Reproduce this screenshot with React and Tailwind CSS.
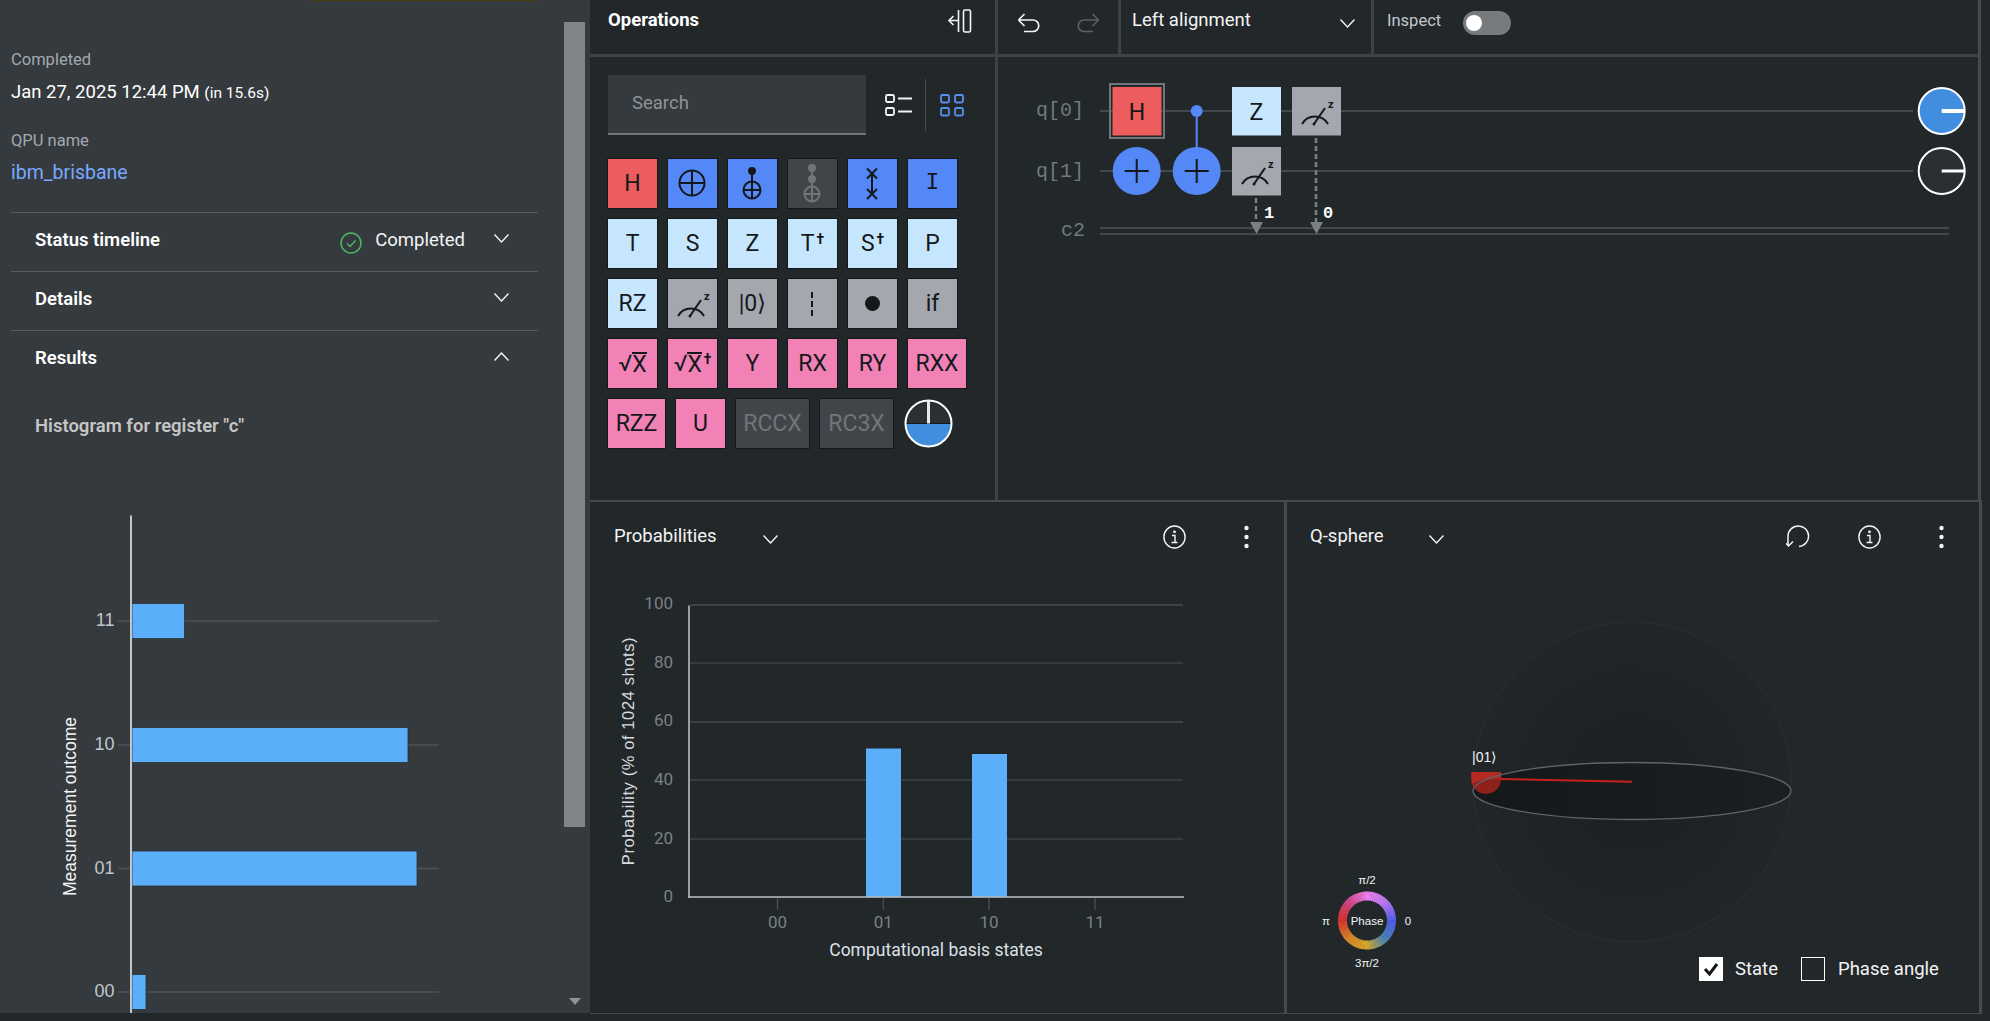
import React from "react";

const sans = "[font-family:Roboto,sans-serif]";
const ink = "#14181b";

function Chevron({ up = false, className = "" }) {
  return (
    <svg width="15" height="9" viewBox="0 0 15 9" fill="none" stroke="#f4f4f4" strokeWidth="1.4" className={className}>
      <polyline points={up ? "0.5,8.5 7.5,1 14.5,8.5" : "0.5,0.5 7.5,8 14.5,0.5"} />
    </svg>
  );
}

function Info() {
  return (
    <svg width="23" height="24" viewBox="0 0 23 24" fill="none" stroke="#f4f4f4" strokeWidth="1.4">
      <ellipse cx="11.5" cy="12" rx="10.6" ry="11" />
      <circle cx="11.5" cy="6.8" r="1.4" fill="#f4f4f4" stroke="none" />
      <path d="M9 10.5h3v7M8.5 17.5h6" />
    </svg>
  );
}

function Kebab() {
  return (
    <svg width="5" height="24" viewBox="0 0 5 24" fill="#f4f4f4">
      <circle cx="2.5" cy="3" r="2.2" />
      <circle cx="2.5" cy="12" r="2.2" />
      <circle cx="2.5" cy="21" r="2.2" />
    </svg>
  );
}

function Meter({ color = ink }) {
  return (
    <svg width="49" height="49" viewBox="0 0 49 49" fill="none" stroke={color} strokeWidth="2">
      <path d="M10 37a15 15 0 0 1 26 0" />
      <path d="M22 37L33 21" />
      <circle cx="22" cy="37" r="1.5" fill={color} stroke="none" />
      <text x="36" y="21" fontSize="11" fontWeight="700" fill={color} stroke="none" fontFamily="Roboto, sans-serif">z</text>
    </svg>
  );
}

function Glyph({ kind }) {
  if (kind === "cx")
    return (
      <svg width="49" height="49" fill="none" stroke={ink} strokeWidth="2">
        <circle cx="24" cy="24" r="12.5" />
        <path d="M24 11.5v25M11.5 24h25" />
      </svg>
    );
  if (kind === "ccx")
    return (
      <svg width="49" height="49" fill="none" stroke={ink} strokeWidth="2">
        <circle cx="24" cy="12" r="3" fill={ink} />
        <circle cx="24" cy="31" r="8.5" />
        <path d="M24 12v27.5M15.5 31h17" />
      </svg>
    );
  if (kind === "tof")
    return (
      <svg width="49" height="49" fill="none" stroke="#70757a" strokeWidth="2">
        <circle cx="24" cy="9" r="3" fill="#70757a" />
        <circle cx="24" cy="20" r="3" fill="#70757a" />
        <circle cx="24" cy="35" r="7.5" />
        <path d="M24 9v33.5M16.5 35h15" />
      </svg>
    );
  if (kind === "swap")
    return (
      <svg width="49" height="49" fill="none" stroke={ink} strokeWidth="2">
        <path d="M24 14v21M19 9.5l10 10M29 9.5l-10 10M19 30l10 10M29 30l-10 10" />
      </svg>
    );
  if (kind === "barrier")
    return (
      <svg width="49" height="49" fill="none" stroke={ink} strokeWidth="2">
        <path d="M24 13v6M24 22v6M24 31v6" />
      </svg>
    );
  if (kind === "dot")
    return (
      <svg width="49" height="49">
        <circle cx="24.5" cy="24.5" r="7.5" fill={ink} />
      </svg>
    );
  return <Meter />;
}

function Gate({ bg, label, sup, kind, root, w = "w-[49px]", text = "text-[#14181b]", mono }) {
  return (
    <div className={`${w} h-[49px] ${bg} ${text} flex items-center justify-center text-[23px] leading-none shadow-[0_0_0_1px_#14181b] ${mono ? "[font-family:'Liberation_Mono',monospace]" : ""}`}>
      {kind ? (
        <Glyph kind={kind} />
      ) : (
        <span className="flex items-start">
          {root && <span className="text-[23px] leading-none">√</span>}
          <span className={root ? "border-t-2 border-[#14181b] leading-[21px]" : ""}>{label}</span>
          {sup && <span className="text-[14px] leading-none font-bold ml-[2px]">†</span>}
        </span>
      )}
    </div>
  );
}

const red = "bg-[#ee5d5d]";
const blue = "bg-[#5588f7]";
const light = "bg-[#c5e6fc]";
const gray = "bg-[#a4a8ae]";
const pink = "bg-[#f282b5]";
const off = "bg-[#414549]";

function Operations() {
  return (
    <section className="w-[405px] flex flex-col">
      <div className="h-[54px] flex items-center justify-between pl-[18px] pr-[23px] pb-3">
        <h2 className="text-[18.5px] font-bold text-white">Operations</h2>
        <svg width="24" height="24" viewBox="0 0 24 24" fill="none" stroke="#f4f4f4" strokeWidth="1.6">
          <path d="M1 11.5h9M5.5 7l-4.5 4.5 4.5 4.5M10.5 1v22" />
          <rect x="15.5" y="1" width="7" height="22" rx="1.5" />
        </svg>
      </div>
      <div className="h-[3px] bg-[#3d4246]" />
      <div className="px-[18px] pt-[18px]">
        <div className="flex items-center">
          <div className="w-[258px] h-[60px] bg-[#353a3e] border-b-2 border-[#6f7579] flex items-center pl-6 text-[18.5px] text-[#8d9397]">
            Search
          </div>
          <svg width="28" height="24" viewBox="0 0 28 24" fill="none" stroke="#f4f4f4" strokeWidth="1.8" className="ml-[19px]">
            <rect x="1" y="2" width="8" height="7" rx="1.5" />
            <rect x="1" y="15" width="8" height="7" rx="1.5" />
            <path d="M13 5.5h14M13 18.5h14" />
          </svg>
          <div className="w-px h-[52px] bg-[#4a4f53] ml-3" />
          <svg width="25" height="24" viewBox="0 0 25 24" fill="none" stroke="#5a8ff0" strokeWidth="1.8" className="ml-[14px]">
            <rect x="1" y="2" width="8" height="7.5" rx="1.5" />
            <rect x="15" y="2" width="8" height="7.5" rx="1.5" />
            <rect x="1" y="15" width="8" height="7.5" rx="1.5" />
            <rect x="15" y="15" width="8" height="7.5" rx="1.5" />
          </svg>
        </div>
        <div className="w-[370px] mt-6 flex flex-wrap gap-[11px]">
          <Gate bg={red} label="H" />
          <Gate bg={blue} kind="cx" />
          <Gate bg={blue} kind="ccx" />
          <Gate bg={off} kind="tof" />
          <Gate bg={blue} kind="swap" />
          <Gate bg={blue} label="I" mono />
          <Gate bg={light} label="T" />
          <Gate bg={light} label="S" />
          <Gate bg={light} label="Z" />
          <Gate bg={light} label="T" sup />
          <Gate bg={light} label="S" sup />
          <Gate bg={light} label="P" />
          <Gate bg={light} label="RZ" />
          <Gate bg={gray} kind="meter" />
          <Gate bg={gray} label="|0⟩" />
          <Gate bg={gray} kind="barrier" />
          <Gate bg={gray} kind="dot" />
          <Gate bg={gray} label="if" />
          <Gate bg={pink} label="X" root />
          <Gate bg={pink} label="X" root sup />
          <Gate bg={pink} label="Y" />
          <Gate bg={pink} label="RX" />
          <Gate bg={pink} label="RY" />
          <Gate bg={pink} label="RXX" w="w-[58px]" />
          <Gate bg={pink} label="RZZ" w="w-[57px]" />
          <Gate bg={pink} label="U" />
          <Gate bg={off} label="RCCX" w="w-[73px]" text="text-[#70757a]" />
          <Gate bg={off} label="RC3X" w="w-[73px]" text="text-[#70757a]" />
          <svg width="49" height="49" viewBox="0 0 49 49">
            <circle cx="24.5" cy="24.5" r="23" fill="#2a2f33" />
            <path d="M1.5 24.5h46a23 23 0 0 1-46 0z" fill="#418ee0" />
            <path d="M1.5 24.5h46" stroke="#14181b" strokeWidth="1" />
            <circle cx="24.5" cy="24.5" r="23" fill="none" stroke="#fff" strokeWidth="2" />
            <path d="M24.5 1.5v23" stroke="#e8e8e8" strokeWidth="3" />
          </svg>
        </div>
      </div>
    </section>
  );
}

function Toolbar() {
  return (
    <div className="h-[54px] flex">
      <div className="w-[120px] flex items-start pt-[13px] pl-[19px] gap-[37px]">
        <svg width="23" height="20" viewBox="0 0 23 20" fill="none" stroke="#f4f4f4" strokeWidth="1.7">
          <path d="M1.5 7L7.5 1M1.5 7l6 6M1.5 7H16a5.6 5.6 0 0 1 0 11.5H7" />
        </svg>
        <svg width="23" height="20" viewBox="0 0 23 20" fill="none" stroke="#5a6064" strokeWidth="1.7">
          <path d="M21.5 7L15.5 1M21.5 7l-6 6M21.5 7H7a5.6 5.6 0 0 0 0 11.5h9" />
        </svg>
      </div>
      <div className="w-[3px] bg-[#3d4246]" />
      <div className="w-[250px] flex items-center justify-between pl-[11px] pr-4 pb-3">
        <span className="text-[18.5px] text-[#f4f4f4]">Left alignment</span>
        <Chevron className="mt-1" />
      </div>
      <div className="w-[3px] bg-[#3d4246]" />
      <div className="flex items-center pl-[13px] pb-3 text-[16.5px] text-[#c1c7cd]">
        <span className="w-[63px]">Inspect</span>
        <div className="ml-[13px] mt-1 w-12 h-6 rounded-full bg-[#777b7e] flex items-center pl-[3px]">
          <div className="w-4 h-4 rounded-full bg-white" />
        </div>
      </div>
    </div>
  );
}

function Circuit() {
  const wire = "#42484c";
  return (
    <svg viewBox="998 57 980 443" className="w-[980px] h-[443px]" fill="none">
      <g fontFamily="'Liberation Mono', monospace" fontSize="20" fill="#70797f">
        <text x="1036" y="116">q[0]</text>
        <text x="1036" y="177">q[1]</text>
        <text x="1061" y="236">c2</text>
      </g>
      <path d={`M1100 111H1913M1100 171H1913`} stroke={wire} strokeWidth="2" />
      <path d={`M1100 228H1949M1100 234H1949`} stroke={wire} strokeWidth="2" />

      <rect x="1110" y="84" width="54" height="54" stroke="#6f7579" strokeWidth="2" />
      <rect x="1112.5" y="87" width="49" height="48.5" fill="#ee5d5d" />
      <text x="1137" y="120" fontSize="23" textAnchor="middle" fill={ink} fontFamily="Roboto, sans-serif">H</text>

      <circle cx="1136.7" cy="171" r="24" fill="#5588f7" />
      <path d="M1124.7 171h24M1136.7 159v24" stroke={ink} strokeWidth="2" />
      <path d="M1196.7 111v60" stroke="#5588f7" strokeWidth="2" />
      <circle cx="1196.7" cy="111" r="6" fill="#5588f7" />
      <circle cx="1196.7" cy="171" r="24" fill="#5588f7" />
      <path d="M1184.7 171h24M1196.7 159v24" stroke={ink} strokeWidth="2" />

      <rect x="1232" y="87" width="49" height="48.5" fill="#c5e6fc" />
      <text x="1256.5" y="120" fontSize="23" textAnchor="middle" fill={ink} fontFamily="Roboto, sans-serif">Z</text>
      <rect x="1292" y="87" width="49" height="48.5" fill="#a4a8ae" />
      <svg x="1292" y="87" width="49" height="49" viewBox="0 0 49 49"><Meter /></svg>
      <rect x="1232" y="147" width="49" height="48.5" fill="#a4a8ae" />
      <svg x="1232" y="147" width="49" height="49" viewBox="0 0 49 49"><Meter /></svg>

      <path d="M1256 198v25M1316 138v85" stroke="#7a7f83" strokeWidth="2.5" strokeDasharray="5 3" />
      <path d="M1250 222h13l-6.500 12zM1310 222h13l-6.500 12z" fill="#7a7f83" />
      <g fontFamily="'Liberation Mono', monospace" fontSize="17" fontWeight="700" fill="#fff" textAnchor="middle">
        <text x="1269" y="218">1</text>
        <text x="1328" y="218">0</text>
      </g>

      <circle cx="1941.700" cy="111" r="23" fill="#418ee0" stroke="#fff" strokeWidth="2" />
      <path d="M1941.700 111h23" stroke="#fff" strokeWidth="4" />
      <circle cx="1941.700" cy="171" r="23" fill="#2a2f33" stroke="#fff" strokeWidth="2" />
      <path d="M1941.700 171h23" stroke="#fff" strokeWidth="3" />
    </svg>
  );
}

function PanelHeader({ title, titleW, children }) {
  return (
    <div className="h-[70px] flex items-center justify-between flex-none">
      <div className="flex items-center">
        <span className={`${titleW} text-[18.5px] text-[#f4f4f4]`}>{title}</span>
        <Chevron className="mt-1" />
      </div>
      {children}
    </div>
  );
}

function Probabilities() {
  const ticks = [
    ["100", 606, 610],
    ["80", 664, 669],
    ["60", 723, 727],
    ["40", 781, 786],
    ["20", 840, 845],
    ["0", 898, 903],
  ];
  const states = [
    ["00", 777.5],
    ["01", 883.3],
    ["10", 989],
    ["11", 1095],
  ];
  return (
    <section className="w-[694px] flex flex-col">
      <div className="pl-[24px] pr-[35px]">
        <PanelHeader title="Probabilities" titleW="w-[149px]">
          <div className="flex items-center gap-[58px]">
            <Info />
            <Kebab />
          </div>
        </PanelHeader>
      </div>
      <svg viewBox="590 573 694 441" className="w-[694px] h-[441px]" fill="none">
        {ticks.map(([, y]) => (
          <path key={y} d={`M690 ${y}H1183`} stroke="#3c4246" strokeWidth={y === 606 || y === 723 ? 2 : 1.300} />
        ))}
        <g fontFamily="Roboto, sans-serif" fontSize="17" fill="#7a8085" textAnchor="end">
          {ticks.map(([t, , y]) => (
            <text key={t} x="673" y={y}>{t}</text>
          ))}
        </g>
        <rect x="866" y="749.500" width="35" height="148.500" fill="#5aaefa" />
        <rect x="972" y="755" width="35" height="143" fill="#5aaefa" />
        <path d="M689 606.500V899M688 898H1184" stroke="#b5bcc2" strokeWidth="1.600" />
        {states.map(([s, x]) => (
          <g key={s}>
            <path d={`M${x} 899v12`} stroke="#4a5054" strokeWidth="1.300" />
            <text x={x} y="929" fontFamily="Roboto, sans-serif" fontSize="17" fill="#7a8085" textAnchor="middle">{s}</text>
          </g>
        ))}
        <text x="936" y="957" fontFamily="Roboto, sans-serif" fontSize="17.500" fill="#dde1e6" textAnchor="middle">Computational basis states</text>
        <text transform="translate(634 752) rotate(-90)" fontFamily="'Liberation Sans', sans-serif" fontSize="16.500" letterSpacing="0.600" fill="#d5dade" textAnchor="middle">Probability (% of 1024 shots)</text>
      </svg>
    </section>
  );
}

// colour stops of the phase ring, clockwise from the top
const ringStops = ["#ee80ee", "#b476f0", "#4d5fec", "#4a86b0", "#d8a828", "#d5822a", "#d93030", "#cf4a8c"];

function PhaseRing({ cx, cy }) {
  const n = ringStops.length;
  const mix = (a, b, t) => {
    const p = (h) => [1, 3, 5].map((i) => parseInt(h.slice(i, i + 2), 16));
    const A = p(a);
    const B = p(b);
    return `rgb(${A.map((v, i) => Math.round(v + (B[i] - v) * t)).join(",")})`;
  };
  const segs = [];
  for (let d = 0; d < 360; d += 5) {
    const pos = (d / 360) * n;
    const i = Math.floor(pos);
    const color = mix(ringStops[i], ringStops[(i + 1) % n], pos - i);
    const a = ((d - 90) * Math.PI) / 180;
    const b = ((d + 5.500 - 90) * Math.PI) / 180;
    const r = 24.500;
    segs.push(
      <path
        key={d}
        d={`M${cx + r * Math.cos(a)} ${cy + r * Math.sin(a)}A${r} ${r} 0 0 1 ${cx + r * Math.cos(b)} ${cy + r * Math.sin(b)}`}
        stroke={color}
        strokeWidth="9"
        fill="none"
      />
    );
  }
  return <g>{segs}</g>;
}

function QSphere() {
  return (
    <section className="w-[692px] flex flex-col relative">
      <svg viewBox="1287 503 692 511" className="absolute inset-0 w-[692px] h-[511px]" fill="none">
        <defs>
          <radialGradient id="globe" cx="50%" cy="50%" r="50%">
            <stop offset="0%" stopColor="#1b1f22" />
            <stop offset="100%" stopColor="#212629" />
          </radialGradient>
          <linearGradient id="disc" x1="0" x2="1" y1="0" y2="0">
            <stop offset="0%" stopColor="#14181b" />
            <stop offset="100%" stopColor="#1b1f22" />
          </linearGradient>
          <clipPath id="ball">
            <rect x="1465" y="773" width="45" height="30" />
          </clipPath>
        </defs>
        <ellipse cx="1632" cy="783" rx="159" ry="160" fill="url(#globe)" stroke="#2a2f33" />
        <ellipse cx="1632" cy="792" rx="159" ry="28.500" fill="url(#disc)" />
        <g clipPath="url(#ball)">
          <circle cx="1486" cy="780" r="15" fill="#8f201b" />
          <path d="M1471 773h30v7q-15 -2 -29 5z" fill="#b32a22" />
        </g>
        <ellipse cx="1632" cy="792" rx="159" ry="28.500" stroke="#5f6468" strokeWidth="1.300" />
        <path d="M1500 780L1632 782.700" stroke="#c8201c" strokeWidth="2" />
        <text x="1472" y="763" fontFamily="'Liberation Sans', sans-serif" fontSize="14" fill="#f4f4f4">|01⟩</text>

        <PhaseRing cx={1367} cy={921.500} />
        <g fontFamily="'Liberation Sans', sans-serif" fontSize="11.500" fill="#f4f4f4" textAnchor="middle">
          <text x="1367" y="885">π/2</text>
          <text x="1367" y="967.500">3π/2</text>
          <text x="1326" y="925.500">π</text>
          <text x="1408" y="925.500">0</text>
          <text x="1367" y="925.500">Phase</text>
        </g>
      </svg>
      <div className="pl-[23px] pr-[35px] relative">
        <PanelHeader title="Q-sphere" titleW="w-[119px]">
          <div className="flex items-center">
            <svg width="24" height="24" viewBox="0 0 24 24" fill="none" stroke="#f4f4f4" strokeWidth="1.500">
              <path d="M13 21.500a10.300 10.300 0 1 0-11-10.500v10M-2 16.500l4.500 4.500 4.500-4.500" className="overflow-visible" />
            </svg>
            <div className="ml-[48px]"><Info /></div>
            <div className="ml-[58px]"><Kebab /></div>
          </div>
        </PanelHeader>
      </div>
      <div className="relative mt-auto pb-[30px] pr-[25px] flex items-center justify-end text-[18.5px] text-[#f4f4f4]">
        <div className="w-6 h-6 bg-white flex items-center justify-center">
          <svg width="16" height="14" viewBox="0 0 16 14" fill="none" stroke="#14181b" strokeWidth="3">
            <path d="M2 7l4.500 5L14 2" />
          </svg>
        </div>
        <span className="ml-3 w-[51px] whitespace-nowrap">State</span>
        <div className="ml-[15px] w-6 h-6 border-[1.500px] border-white" />
        <span className="ml-[13px] w-[116px] whitespace-nowrap">Phase angle</span>
      </div>
    </section>
  );
}

function Row({ title, right, open }) {
  return (
    <div className="h-[59px] border-t border-[#565c60] flex items-center pl-6 pr-[29px] pb-[3px]">
      <span className="text-[18.5px] font-semibold text-white flex-1">{title}</span>
      {right}
      <Chevron up={open} className="mb-[5px]" />
    </div>
  );
}

function Histogram() {
  const rows = [
    ["11", 620, 184.500],
    ["10", 744, 408],
    ["01", 867.500, 417],
    ["00", 991, 146],
  ];
  return (
    <svg viewBox="0 480 564 533" className="w-[564px] h-[533px]" fill="none">
      {rows.map(([label, y, end]) => (
        <g key={label}>
          <path d={`M118 ${y}H439`} stroke="#4c5357" strokeWidth="1.500" />
          <rect x="132" y={y - 17.500} width={end - 132} height="35" fill="#5aaefa" stroke="#2c3135" strokeWidth="0.800" />
          <text x="114.500" y={y + 5} fontFamily="'Liberation Sans', sans-serif" fontSize="18" fill="#c1c7cd" textAnchor="end">{label}</text>
        </g>
      ))}
      <path d="M131 514.500V1013" stroke="#c1c7cd" strokeWidth="2" />
      <text transform="translate(76 805.500) rotate(-90)" fontFamily="'Liberation Sans', sans-serif" fontSize="17.500" fill="#f4f4f4" textAnchor="middle">Measurement outcome</text>
    </svg>
  );
}

function JobPanel() {
  return (
    <aside className="w-[590px] h-[1013px] bg-[#353a3e] flex overflow-hidden flex-none">
      <div className="w-[564px] flex-none">
        <div className="ml-[310px] w-[228px] h-px bg-[#4a3f10]" />
        <div className="pl-[11px] w-[538px]">
          <div className="mt-[47px] h-[24px] leading-[24px] text-[16.5px] text-[#a2a9b0]">Completed</div>
          <div className="mt-[7px] h-[26px] leading-[26px] text-[18.5px] text-white">
            Jan 27, 2025 12:44 PM <span className="text-[15.5px]">(in 15.6s)</span>
          </div>
          <div className="mt-[24px] h-[24px] leading-[24px] text-[16.5px] text-[#a2a9b0]">QPU name</div>
          <div className="mt-[7px] h-[26px] leading-[26px] text-[19.5px] text-[#78a9ff]">ibm_brisbane</div>
          <div className="mt-[26px]">
            <Row
              title="Status timeline"
              right={
                <div className="flex items-center mr-[29px] text-[18.5px] text-[#f4f4f4]">
                  <svg width="22" height="22" viewBox="0 0 22 22" fill="none" stroke="#4bb866" strokeWidth="1.500" className="mt-1">
                    <circle cx="11" cy="11" r="10" />
                    <path d="M7 11.500l3 3 5.500-6" />
                  </svg>
                  <span className="ml-[13px]">Completed</span>
                </div>
              }
            />
            <Row title="Details" />
            <Row title="Results" open />
          </div>
          <div className="pl-6 mt-[24px] h-[26px] leading-[26px] text-[18.5px] font-semibold text-[#c6c6c6]">
            Histogram for register "c"
          </div>
        </div>
        <div className="mt-[42px]">
          <Histogram />
        </div>
      </div>
      <div className="w-[21px] flex-none flex flex-col items-center">
        <div className="mt-[22px] w-[21px] h-[805px] bg-[#7f8589]" />
        <svg width="12" height="7" viewBox="0 0 12 7" className="mt-[171px]">
          <path d="M0 0h12L6 7z" fill="#8d9397" />
        </svg>
      </div>
    </aside>
  );
}

export default function App() {
  return (
    <div className={`w-screen h-screen overflow-hidden bg-[#22272a] flex ${sans}`}>
      <JobPanel />
      <main className="flex-1 flex flex-col h-[1014px] border-l-0">
        <div className="h-[500px] flex">
          <Operations />
          <div className="w-[3px] bg-[#3d4246]" />
          <section className="w-[980px] flex flex-col">
            <Toolbar />
            <div className="h-[3px] bg-[#3d4246]" />
            <Circuit />
          </section>
          <div className="w-[3px] bg-[#444a4e]" />
        </div>
        <div className="h-[3px] w-[1392px] bg-[#444a4e]" />
        <div className="flex-1 flex">
          <Probabilities />
          <div className="w-[3px] bg-[#444a4e]" />
          <QSphere />
          <div className="w-[3px] bg-[#444a4e]" />
        </div>
        <div className="h-px w-[1392px] bg-[#444a4e]" />
      </main>
    </div>
  );
}
